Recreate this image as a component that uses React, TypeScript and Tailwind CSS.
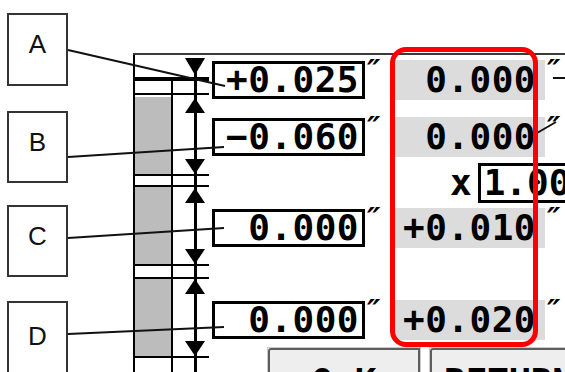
const mono = "font-['DejaVu_Sans_Mono',monospace] font-bold";

function Label({ text, top, height }: { text: string; top: string; height: string }) {
  return (
    <div
      className={`absolute left-[7px] ${top} ${height} w-[61px] border-2 border-[#333] bg-white flex items-center justify-center pb-[10px] font-['Liberation_Sans',Arial,sans-serif] text-[26px] text-[#111]`}
    >
      {text}
    </div>
  );
}

function Inch() {
  return (
    <span className="self-start leading-none text-[30px] -mt-[4px] font-['DejaVu_Sans',sans-serif] font-bold italic">
      ″
    </span>
  );
}

function ValueRow({ left, right, className = "" }: { left: string; right: string; className?: string }) {
  return (
    <div className={`flex items-center h-[40px] shrink-0 ${className}`}>
      <div className={`ml-[2px] w-[153px] h-[38px] border-[3px] border-black flex items-center justify-end pr-[3px] text-[36px] leading-none tracking-[0.5px] ${mono}`}>
        {left}
      </div>
      <div className="w-[30px] h-full flex pl-[2px]">
        <Inch />
      </div>
      <div className={`w-[150px] h-full bg-[#dcdcdc] flex items-center justify-end pr-[9px] text-[36px] leading-none tracking-[0.5px] ${mono}`}>
        {right}
      </div>
      <div className="h-full flex pl-[2px]">
        <Inch />
      </div>
    </div>
  );
}

function Ruler() {
  const seg = (top: number, bottom: number) => (
    <g key={top}>
      <rect x={2} y={top} width={36} height={bottom - top} fill="#bcbcbc" />
      <polygon points={`62,${top + 1} 72,${top + 16} 52,${top + 16}`} fill="#000" />
      <polygon points={`52,${bottom - 16} 72,${bottom - 16} 62,${bottom - 1}`} fill="#000" />
    </g>
  );
  return (
    <svg width="77" height="317" viewBox="0 2 77 317" className="shrink-0 block">
      {seg(44, 122)}
      {seg(134, 212)}
      {seg(225, 304)}
      <rect x={0} y={0} width={2} height={330} fill="#000" />
      <rect x={38} y={26} width={2} height={300} fill="#000" />
      <rect x={61} y={8} width={3} height={320} fill="#000" />
      <polygon points="52,5 72,5 62,22" fill="#000" />
      <rect x={0} y={24} width={76} height={4} fill="#000" />
      <rect x={0} y={40} width={76} height={2} fill="#000" />
      <rect x={0} y={121} width={76} height={2} fill="#000" />
      <rect x={0} y={132} width={76} height={2} fill="#000" />
      <rect x={0} y={211} width={76} height={2} fill="#000" />
      <rect x={0} y={224} width={76} height={2} fill="#000" />
      <rect x={0} y={303} width={76} height={2} fill="#000" />
    </svg>
  );
}

function Button({ text, className = "" }: { text: string; className?: string }) {
  return (
    <div className={`w-[154px] h-[40px] border border-[#c8c8c8] shrink-0 ${className}`}>
      <div className={`h-full border-2 border-[#5e5e5e] rounded-tl-[3px] bg-[#eeeeee] flex justify-center pt-[14px] text-[36px] leading-none ${mono}`}>
        {text}
      </div>
    </div>
  );
}

export default function App() {
  return (
    <div className="relative w-[565px] h-[372px] overflow-hidden bg-white text-black">
      <div className="absolute left-[133px] top-[53px] right-0 bottom-0 border-t-2 border-[#3a3a3a] flex">
        <Ruler />
        <div className="flex flex-col pt-[5px] shrink-0">
          <ValueRow left="+0.025" right="0.000" />
          <ValueRow left="−0.060" right="0.000" className="mt-[17px]" />
          <div className="flex items-center h-[40px] mt-[6px] shrink-0">
            <span className={`ml-[240px] text-[36px] leading-none ${mono}`}>x</span>
            <div className={`ml-[6px] w-[110px] h-[40px] border-[3px] border-black flex items-center pl-[3px] text-[36px] leading-none shrink-0 ${mono}`}>
              1.00
            </div>
          </div>
          <ValueRow left="0.000" right="+0.010" className="mt-[5px]" />
          <ValueRow left="0.000" right="+0.020" className="mt-[52px]" />
          <div className="flex mt-[7px] ml-[57px] gap-[8px] shrink-0">
            <Button text="O K" />
            <Button text="RETURN" className="w-[160px]" />
          </div>
        </div>
      </div>

      <svg className="absolute inset-0 pointer-events-none" width="565" height="372">
        <g stroke="#111" strokeWidth="2">
          <line x1="68" y1="50" x2="225" y2="86" />
          <line x1="68" y1="157" x2="224" y2="147" />
          <line x1="68" y1="238" x2="224" y2="228" />
          <line x1="68" y1="334" x2="224" y2="327" />
          <line x1="537" y1="133" x2="556" y2="122" />
          <line x1="553" y1="78" x2="565" y2="78" />
        </g>
      </svg>

      <Label text="A" top="top-[13px]" height="h-[73px]" />
      <Label text="B" top="top-[111px]" height="h-[72px]" />
      <Label text="C" top="top-[205px]" height="h-[72px]" />
      <Label text="D" top="top-[301px]" height="h-[80px]" />

      <div className="absolute left-[390px] top-[47px] w-[148px] h-[300px] border-[5px] border-[#ff0000] rounded-[16px]" />
    </div>
  );
}
